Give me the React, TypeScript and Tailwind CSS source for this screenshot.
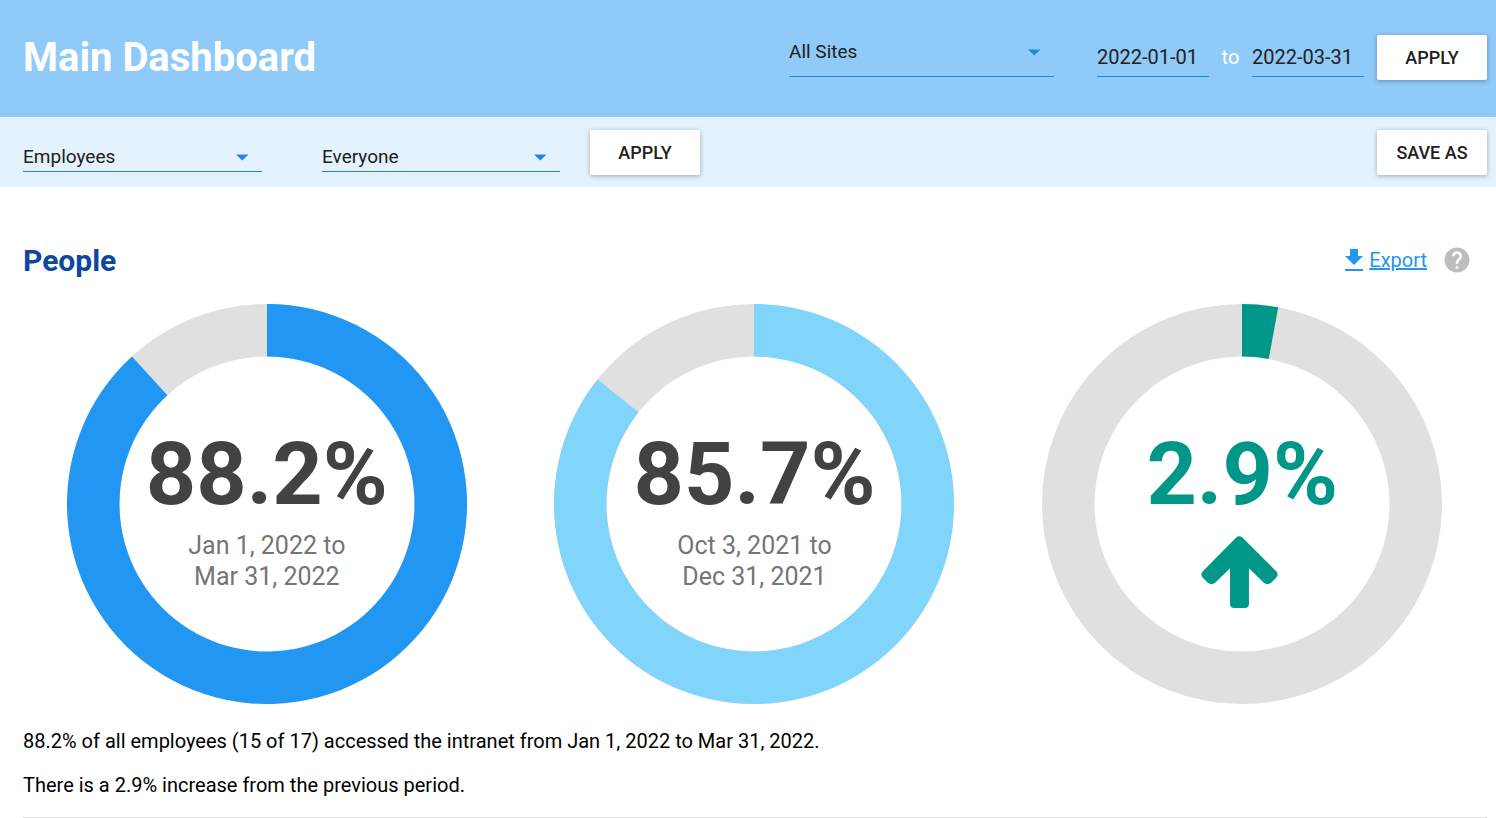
import { useState } from "react";
import { MdHelp } from "react-icons/md";

const buttonClass =
  "h-[45px] w-[110px] shrink-0 rounded-[2px] bg-white text-[18px] font-medium text-[#212121] shadow-[0_1px_5px_rgba(0,0,0,0.3)]";

type DropdownProps = {
  label: string;
  options: string[];
  box: string;
};

function Dropdown({ label, options, box }: DropdownProps) {
  return (
    <div className={`grid items-center border-b border-[#1e88e5] ${box}`}>
      <select
        aria-label={label}
        className="col-start-1 row-start-1 h-full w-full appearance-none bg-transparent pr-8 text-[19px] text-[#212121] outline-none"
      >
        {options.map((option) => (
          <option key={option}>{option}</option>
        ))}
      </select>
      <svg
        viewBox="0 0 13 7"
        className="pointer-events-none col-start-1 row-start-1 mr-[13px] h-[7px] w-[13px] justify-self-end"
        aria-hidden="true"
      >
        <path d="M0 0.500h12.500L6.250 6.500z" fill="#1e88e5" />
      </svg>
    </div>
  );
}

function DateField({ label, initial }: { label: string; initial: string }) {
  const [value, setValue] = useState(initial);
  return (
    <input
      type="text"
      aria-label={label}
      value={value}
      onChange={(event) => setValue(event.target.value)}
      className="h-10 w-28 border-b border-[#1e88e5] bg-transparent text-[20px] text-[#212121] outline-none"
    />
  );
}

type DonutProps = {
  value: number;
  color: string;
  textClass: string;
  children: React.ReactNode;
};

function Donut({ value, color, textClass, children }: DonutProps) {
  const angle = (value / 100) * 2 * Math.PI;
  const large = value > 50 ? 1 : 0;
  const point = (r: number) => `${200 + r * Math.sin(angle)} ${200 - r * Math.cos(angle)}`;
  const outer = 200;
  const inner = 147.5;
  return (
    <div className="grid w-full max-w-[400px] justify-self-center">
      <svg viewBox="0 0 400 400" className="col-start-1 row-start-1 w-full" aria-hidden="true">
        <circle cx="200" cy="200" r="173.75" fill="none" stroke="#e0e0e0" strokeWidth="52.5" />
        <path
          d={`M200 0A${outer} ${outer} 0 ${large} 1 ${point(outer)}L${point(inner)}A${inner} ${inner} 0 ${large} 0 200 ${200 - inner}Z`}
          fill={color}
        />
      </svg>
      <div className="col-start-1 row-start-1 flex flex-col items-center pt-[118px] text-center">
        <p className={`text-[88px] leading-[104px] font-bold ${textClass}`}>{value}%</p>
        {children}
      </div>
    </div>
  );
}

function Period({ from, to }: { from: string; to: string }) {
  return (
    <p className="mt-1 text-[25px] leading-[31px] text-[#757575]">
      {from} to
      <br />
      {to}
    </p>
  );
}

export default function App() {
  return (
    <div className="bg-white font-['Roboto',sans-serif] text-black">
      <header className="flex items-start bg-[#90caf9] pt-[35px] pr-[9px] pb-[37px] pl-[23px]">
        <h1 className="grow text-[40px] leading-[45px] font-bold text-white">Main Dashboard</h1>
        <form className="flex items-end" onSubmit={(event) => event.preventDefault()}>
          <div className="mb-[3px] flex items-end">
            <Dropdown label="Site" options={["All Sites"]} box="mr-[43px] -mt-3 h-12 w-[265px]" />
            <DateField label="Start date" initial="2022-01-01" />
            <span className="w-[43px] pb-1 text-center text-[20px] leading-[31px] text-white">to</span>
            <DateField label="End date" initial="2022-03-31" />
          </div>
          <button type="submit" className={`ml-[13px] ${buttonClass}`}>
            APPLY
          </button>
        </form>
      </header>

      <form
        className="flex items-center bg-[#e3f2fd] pt-[13px] pr-[9px] pb-3 pl-[23px]"
        onSubmit={(event) => event.preventDefault()}
      >
        <Dropdown label="Group" options={["Employees"]} box="mr-[60px] mt-[10px] h-[29px] w-[239px]" />
        <Dropdown label="Audience" options={["Everyone"]} box="mr-[30px] mt-[10px] h-[29px] w-[238px]" />
        <button type="submit" className={buttonClass}>
          APPLY
        </button>
        <button type="button" className={`ml-auto ${buttonClass}`}>
          SAVE AS
        </button>
      </form>

      <main className="pt-14 pr-[9px] pl-[23px]">
        <div className="flex items-start justify-between pr-[15px]">
          <h2 className="text-[30px] leading-9 font-bold text-[#0d47a1]">People</h2>
          <div className="flex items-center gap-[15px] pt-[2px]">
            <a href="#export" className="flex items-center gap-[6px] text-[20px] leading-[30px] text-[#2196f3]">
              <svg viewBox="0 0 18 22" className="h-[22px] w-[18px]" aria-hidden="true">
                <path d="M5 0h8v7h5L9 16 0 7h5zM0 20h18v2H0z" fill="currentColor" />
              </svg>
              <span className="underline decoration-2">Export</span>
            </a>
            <button type="button" aria-label="Help" className="text-[#bdbdbd]">
              <MdHelp className="size-[30px]" />
            </button>
          </div>
        </div>

        <section className="mt-[25px] grid grid-cols-3 pr-px" aria-label="People charts">
          <Donut value={88.2} color="#2196f3" textClass="text-[#424242]">
            <Period from="Jan 1, 2022" to="Mar 31, 2022" />
          </Donut>
          <Donut value={85.7} color="#81d4fa" textClass="text-[#424242]">
            <Period from="Oct 3, 2021" to="Dec 31, 2021" />
          </Donut>
          <Donut value={2.9} color="#009688" textClass="text-[#009688]">
            <svg viewBox="0 0 231 217" className="mt-[10px] mr-[6px] h-[72px] w-[77px]" aria-hidden="true">
              <path
                d="M105 5Q115 -3 125 5L226 106Q235 115 226 126L211 141Q200 150 189 141L144 97V205Q144 217 132 217H99Q87 217 87 205V97L42 141Q31 150 20 141L5 126Q-4 115 5 106Z"
                fill="#009688"
              />
            </svg>
          </Donut>
        </section>

        <div className="mt-[22px] space-y-[14px] border-b border-[#e0e0e0] pb-[17px] text-[20px] leading-[30px]">
          <p>88.2% of all employees (15 of 17) accessed the intranet from Jan 1, 2022 to Mar 31, 2022.</p>
          <p>There is a 2.9% increase from the previous period.</p>
        </div>
      </main>
    </div>
  );
}
